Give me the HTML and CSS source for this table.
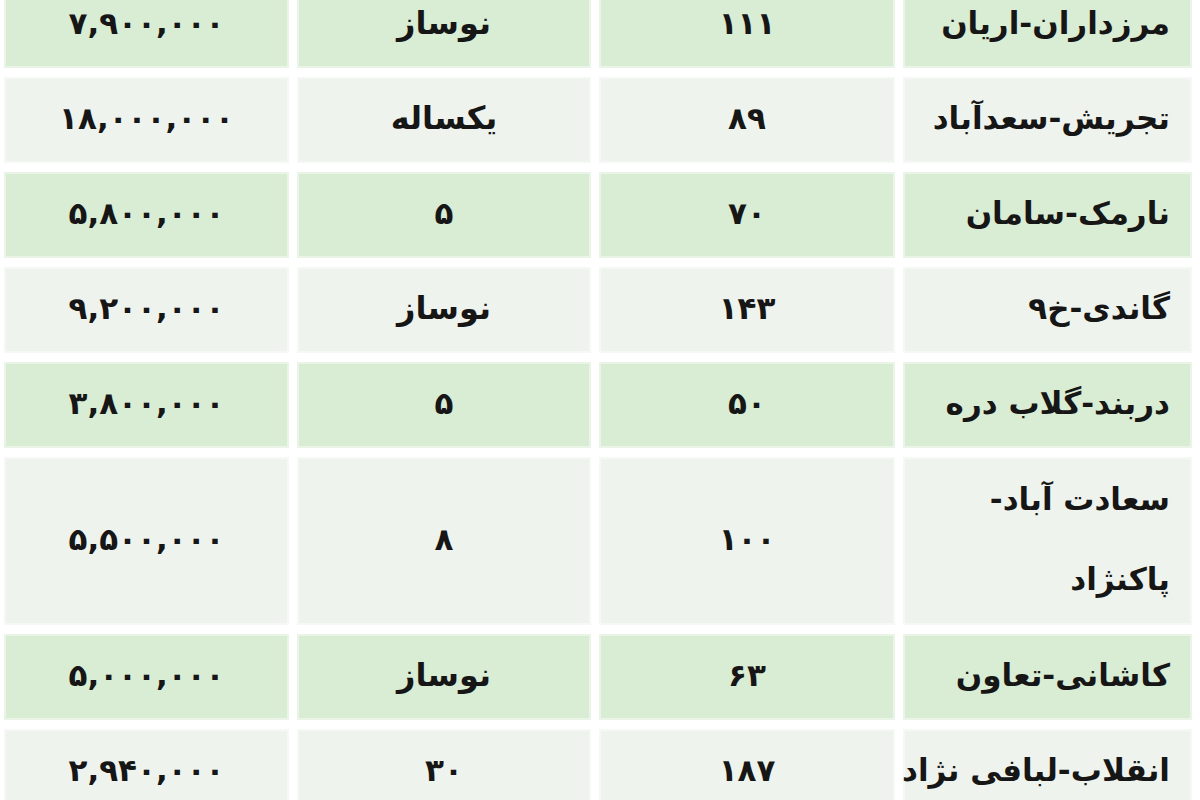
FILE: index.html
```html
<!DOCTYPE html>
<html lang="fa" dir="rtl">
<head>
<meta charset="utf-8">
<title>جدول قیمت</title>
<link rel="stylesheet" href="styles.css">
</head>
<body>
<div class="table">
  <div class="row green">
    <div class="cell name">مرزداران-اریان</div>
    <div class="cell num">۱۱۱</div>
    <div class="cell">نوساز</div>
    <div class="cell num">۷,۹۰۰,۰۰۰</div>
  </div>
  <div class="row gray">
    <div class="cell name">تجریش-سعدآباد</div>
    <div class="cell num">۸۹</div>
    <div class="cell">یکساله</div>
    <div class="cell num">۱۸,۰۰۰,۰۰۰</div>
  </div>
  <div class="row green">
    <div class="cell name">نارمک-سامان</div>
    <div class="cell num">۷۰</div>
    <div class="cell num">۵</div>
    <div class="cell num">۵,۸۰۰,۰۰۰</div>
  </div>
  <div class="row gray">
    <div class="cell name">گاندی-خ۹</div>
    <div class="cell num">۱۴۳</div>
    <div class="cell">نوساز</div>
    <div class="cell num">۹,۲۰۰,۰۰۰</div>
  </div>
  <div class="row green">
    <div class="cell name">دربند-گلاب دره</div>
    <div class="cell num">۵۰</div>
    <div class="cell num">۵</div>
    <div class="cell num">۳,۸۰۰,۰۰۰</div>
  </div>
  <div class="row gray tall">
    <div class="cell name">سعادت آباد-<br>پاکنژاد</div>
    <div class="cell num">۱۰۰</div>
    <div class="cell num">۸</div>
    <div class="cell num">۵,۵۰۰,۰۰۰</div>
  </div>
  <div class="row green">
    <div class="cell name">کاشانی-تعاون</div>
    <div class="cell num">۶۳</div>
    <div class="cell">نوساز</div>
    <div class="cell num">۵,۰۰۰,۰۰۰</div>
  </div>
  <div class="row gray">
    <div class="cell name">انقلاب-لبافی نژاد</div>
    <div class="cell num">۱۸۷</div>
    <div class="cell num">۳۰</div>
    <div class="cell num">۲,۹۴۰,۰۰۰</div>
  </div>
</div>
</body>
</html>
```

FILE: styles.css
```css
html, body {
  margin: 0;
  padding: 0;
  background: #ffffff;
  overflow: hidden;
}

body {
  width: 1200px;
  height: 800px;
  font-family: "DejaVu Sans", "Noto Sans", sans-serif;
  color: #161616;
}

.table {
  direction: rtl;
  display: flex;
  flex-direction: column;
  gap: 9px;
  margin-top: -18px;
  padding: 0 8px 0 4px;
}

.row {
  display: grid;
  grid-template-columns: 289px 296px 294px 285px;
  column-gap: 8px;
  height: 86px;
}

.row.tall {
  height: 168px;
}

.cell {
  display: flex;
  align-items: center;
  justify-content: center;
  text-align: center;
  white-space: nowrap;
  font-size: 32px;
  font-weight: bold;
  line-height: 80px;
  padding: 0 22px 5px;
  box-shadow: inset 0 0 0 2px rgba(255, 255, 255, 0.45);
}

.cell.num {
  letter-spacing: 3px;
  font-size: 31px;
}

.cell.name {
  justify-content: flex-start;
  text-align: right;
  font-size: 31px;
  padding: 0 22px 5px 2px;
}

.green .cell {
  background: #d9ecd4;
}

.gray .cell {
  background: #eff3ed;
}
```
